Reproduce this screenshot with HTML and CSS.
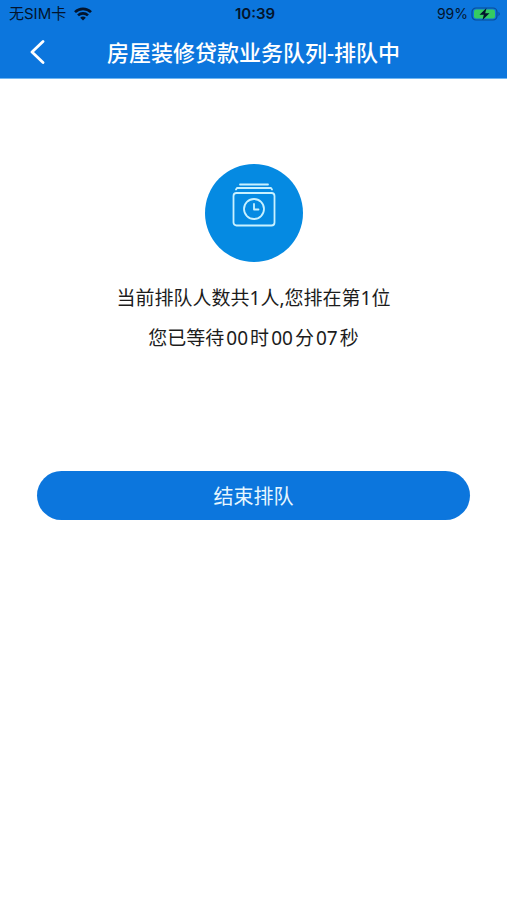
FILE: index.html
```html
<!DOCTYPE html>
<html lang="zh-CN">
<head>
    <meta charset="UTF-8"/>
    <meta name="viewport" content="width=device-width, initial-scale=1">
    <title>房屋装修贷款业务队列-排队中</title>
    <link rel="stylesheet" href="styles.css">
</head>
<body>
<header class="header">
    <div class="status">
        <div class="carrier">
            <span>无SIM卡</span>
            <svg width="18" height="14" viewBox="0 0 18 14" fill="none" stroke="#03142c" stroke-width="2.6">
                <path d="M1 5.2C5.500 .7 12.500 .7 17 5.200"/>
                <path d="M4 8.400C6.800 5.700 11.200 5.700 14 8.400"/>
                <path d="M9 13.500L6.200 10.700C7.700 9.200 10.300 9.200 11.800 10.700Z" fill="#03142c" stroke="none"/>
            </svg>
        </div>
        <div class="time">10:39</div>
        <div class="battery">
            <span>99%</span>
            <svg width="30" height="14" viewBox="0 0 30 14">
                <rect x="1" y="1" width="25" height="12" rx="4" fill="none" stroke="#0a4c94" stroke-width="1.200"/>
                <rect x="3" y="2.500" width="21" height="9" rx="2" fill="#35cb62"/>
                <path d="M27.500 4.800Q30 7 27.500 9.200Z" fill="#0a4c94"/>
                <path d="M15.500 1L8.500 7.800H12.800L11.500 13L18.500 6.200H14.200Z" fill="#03142c"/>
            </svg>
        </div>
    </div>
    <div class="nav">
        <button class="back" type="button" aria-label="返回">
            <svg width="16" height="24" viewBox="0 0 16 24" fill="none" stroke="#fff" stroke-width="2.800" stroke-linecap="round" stroke-linejoin="round">
                <path d="M13 1.500L2 12L13 22.500"/>
            </svg>
        </button>
        <h1 class="title">房屋装修贷款业务队列-排队中</h1>
    </div>
</header>
<main class="main">
    <div class="circle">
        <svg width="44" height="44" viewBox="0 0 44 44" fill="none" stroke="#c9f1ff" stroke-width="1.800" stroke-linecap="round" stroke-linejoin="round">
            <path d="M8 1.500H36"/>
            <path d="M4 6.500L5 5H39L40 6.500"/>
            <rect x="1.500" y="10" width="41" height="32.500" rx="3"/>
            <circle cx="22" cy="26" r="10"/>
            <path d="M22 21V26.500H26.500"/>
        </svg>
    </div>
    <p class="info">当前排队人数共1人,您排在第1位</p>
    <p class="info">您已等待<span class="num">00</span>时<span class="num">00</span>分<span class="num">07</span>秒</p>
    <button class="finish" type="button">结束排队</button>
</main>
</body>
</html>
```
FILE: styles.css
```css
*{
    margin: 0;
    padding: 0;
    box-sizing: border-box;
}
body{
    background: #fff;
    color: #1c1c1c;
    font-family: "Noto Sans", "Noto Sans CJK SC", sans-serif;
}
button{
    border: none;
    font-family: inherit;
    cursor: pointer;
}
svg{
    display: block;
    flex-shrink: 0;
}
.header{
    background: #0c76dd;
    border-bottom: 1px solid #6fb6f2;
}
.status{
    display: grid;
    grid-template-columns: 1fr auto 1fr;
    align-items: center;
    height: 27px;
    padding: 0 6px 0 9px;
    color: #03142c;
    font-family: Inter, "Noto Sans CJK SC", sans-serif;
    font-size: 15px;
    line-height: 20px;
}
.carrier,
.battery{
    display: flex;
    align-items: center;
    gap: 8px;
}
.battery{
    justify-content: flex-end;
    gap: 3px;
    font-size: 14px;
}
.time{
    font-weight: 600;
}
.nav{
    display: grid;
    grid-template-columns: 48px 1fr 48px;
    align-items: center;
    height: 51px;
    padding: 0 14px 2px;
}
.back{
    display: flex;
    justify-content: center;
    padding: 8px 12px;
    background: none;
}
.title{
    color: #fff;
    font-size: 22px;
    font-weight: 500;
    line-height: 32px;
    text-align: center;
    white-space: nowrap;
}
.main{
    padding: 85px 37px 0;
}
.circle{
    display: flex;
    justify-content: center;
    width: 98px;
    height: 98px;
    margin: 0 auto 16px;
    padding-top: 19px;
    border-radius: 50%;
    background: #058ae2;
}
.info{
    font-size: 19px;
    line-height: 40px;
    text-align: center;
}
.num{
    margin: 0 2px;
}
.finish{
    display: block;
    width: 100%;
    height: 49px;
    margin-top: 113px;
    border-radius: 25px;
    background: #0c76dd;
    color: #e6f6ff;
    font-size: 20px;
}
```
